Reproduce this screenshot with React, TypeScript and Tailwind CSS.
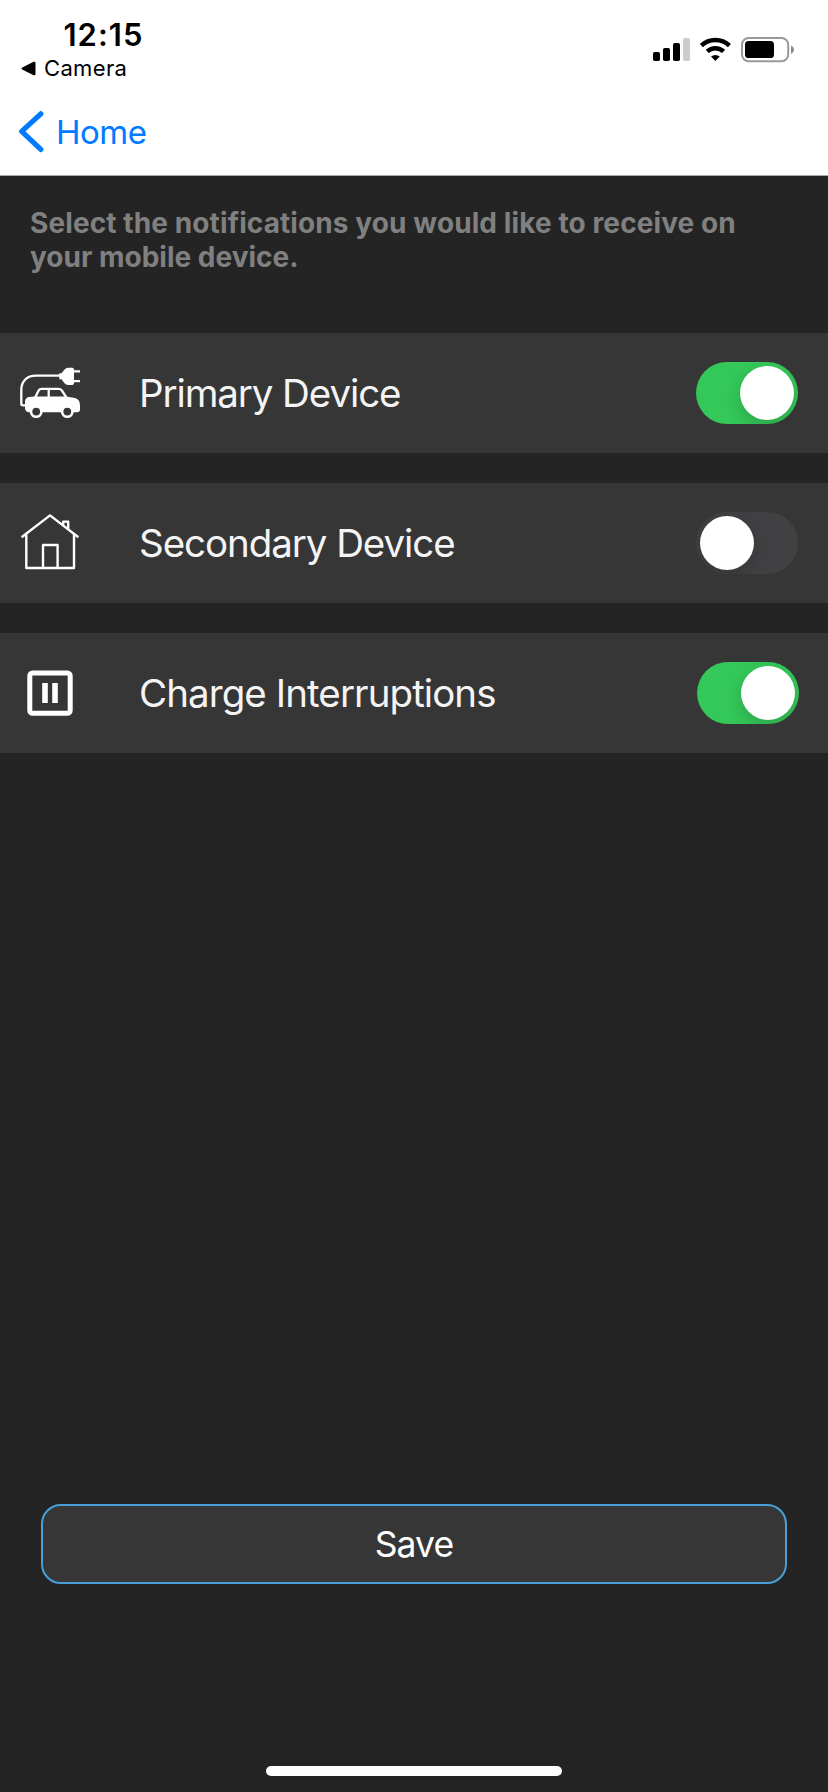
import { useState, type ReactNode } from "react";
import clsx from "clsx";

function StatusIcons() {
  return (
    <svg width="144" height="32" viewBox="652 34 144 32" aria-hidden="true">
      <rect x="653" y="52" width="7" height="9" rx="1.8" />
      <rect x="663" y="48" width="7" height="13" rx="1.8" />
      <rect x="673" y="43" width="7" height="18" rx="1.8" />
      <rect x="683" y="38" width="7" height="23" rx="1.8" fill="#cccccc" />
      <g fill="none" stroke="#000" strokeWidth="4.5">
        <path d="M701.4 45.6 A20.2 20.2 0 0 1 729.4 45.6" />
        <path d="M707.2 51.4 A12 12 0 0 1 723.6 51.4" />
      </g>
      <path d="M715.4 61 L711 56.6 A6.6 6.6 0 0 1 719.8 56.6 Z" />
      <rect x="742" y="38" width="46.2" height="23.2" rx="6.6" fill="#fff" stroke="#999999" strokeWidth="2" />
      <rect x="745" y="41" width="29" height="17" rx="3.6" />
      <path d="M791 45.5 C795 47.5 795 51.8 791 54 Z" fill="#8c8c8c" />
    </svg>
  );
}

function CarIcon() {
  return (
    <svg width="100" height="120" viewBox="0 0 100 120" aria-hidden="true">
      <path
        d="M27 72.3 H23 Q21.3 72.3 21.3 70.5 V57 C21.3 48 27 42.7 36 42.7 H61"
        fill="none" stroke="#fff" strokeWidth="2.3"
      />
      <path d="M59.3 40.2 H61.5 L64.5 36.4 Q66 34.8 68 34.8 H72.3 Q74 34.8 74 36.5 V50.2 Q74 51.9 72.3 51.9 H68 Q66 51.9 64.5 50.3 L61.5 46.2 H59.3 Z" fill="#fff" />
      <path d="M73 38.3 H80 M73 48.2 H80" stroke="#fff" strokeWidth="2.2" />
      <path
        d="M35.2 64.5 L38.6 57.6 Q39.6 55.8 41.6 55.8 H58.6 Q60.6 55.8 61.8 57.4 L66.4 64.5 M48.7 56 V64.5"
        fill="none" stroke="#fff" strokeWidth="2.3"
      />
      <path d="M29 64 L34.5 63.4 H66 L75 65 Q80 66.4 80 72 V76.6 Q80 79.3 77 79.3 H28.5 Q25 78.6 25 75 V69 Q25 64.8 29 64 Z" fill="#fff" />
      <circle cx="36.2" cy="78.6" r="5.2" fill="#363636" stroke="#fff" strokeWidth="2.6" />
      <circle cx="67.3" cy="78.6" r="5.2" fill="#363636" stroke="#fff" strokeWidth="2.6" />
    </svg>
  );
}

function HouseIcon() {
  return (
    <svg width="100" height="120" viewBox="0 0 100 120" fill="none" stroke="#fff" strokeWidth="2.4" strokeLinejoin="round" aria-hidden="true">
      <path d="M21.6 54.2 L50 32.4 L78.4 54.2" />
      <path d="M26.3 51.5 V85 H74 V51.5" />
      <path d="M43 85 V62 H57.6 V85" />
      <path d="M63.2 42 V38.6 H68.2 V46" />
    </svg>
  );
}

function PauseIcon() {
  return (
    <svg width="100" height="120" viewBox="0 0 100 120" aria-hidden="true">
      <rect x="29.8" y="39.9" width="40.4" height="40.4" rx="2.8" fill="none" stroke="#fff" strokeWidth="5" />
      <rect x="42.2" y="50" width="5.6" height="20" fill="#fff" />
      <rect x="52.2" y="50" width="5.6" height="20" fill="#fff" />
    </svg>
  );
}

function Toggle({ label, initial }: { label: string; initial: boolean }) {
  const [on, setOn] = useState(initial);
  return (
    <button
      type="button"
      role="switch"
      aria-checked={on}
      aria-label={label}
      onClick={() => setOn(!on)}
      className={clsx(
        "flex h-[62px] w-[102px] items-center overflow-hidden rounded-full px-1",
        on ? "justify-end bg-[#34c759]" : "justify-start bg-[#414143]",
      )}
    >
      <span className="size-[54px] rounded-full bg-white shadow-[0_6px_16px_rgba(0,0,0,0.17)]" />
    </button>
  );
}

function Row({ icon, label, tracking, on, inset }: { icon: ReactNode; label: string; tracking: string; on: boolean; inset: string }) {
  return (
    <li className={clsx("flex h-[120px] items-center bg-[#363636]", inset)}>
      {icon}
      <span className={clsx("flex-1 pt-0.5 pl-[39px] text-[38.5px] text-[#f4f4f4]", tracking)}>{label}</span>
      <Toggle label={label} initial={on} />
    </li>
  );
}

export default function App() {
  return (
    <div className="flex h-[1792px] w-[828px] flex-col bg-[#242424] font-['Inter',sans-serif]">
      <header className="flex h-44 flex-col border-b border-[#a8a8a8] bg-white">
        <div className="flex justify-between pt-[15px] pr-8">
          <div className="text-black">
            <div className="pl-[63.5px] text-[31px] leading-10 font-semibold tracking-[1px]">12:15</div>
            <div className="flex items-center pl-[21px] text-[22px] leading-[27px] tracking-[0.35px]">
              <svg width="15" height="15" viewBox="0 0 15 15" className="mr-[8px]" aria-hidden="true">
                <path d="M1.3 6.4 L12.6 0.8 Q14.5 0.2 14.5 2 V13 Q14.5 14.8 12.6 14.2 L1.3 8.6 Q-0.3 7.5 1.3 6.4 Z" />
              </svg>
              Camera
            </div>
          </div>
          <div className="pt-[19px]">
            <StatusIcons />
          </div>
        </div>
        <a className="mt-[29px] flex items-center pl-[18px] text-[33px] leading-[42px] tracking-[-0.5px] text-[#007aff]" href="#home">
          <svg width="28" height="42" viewBox="0 0 28 42" className="mr-[10px]" fill="none" aria-hidden="true">
            <path d="M22.8 2.8 L3.7 20.4 L22.8 38.4" stroke="#007aff" strokeWidth="5.2" strokeLinecap="round" strokeLinejoin="round" />
          </svg>
          Home
        </a>
      </header>

      <p className="h-[157px] pt-[30px] pl-[30px] text-[28px] leading-[34px] font-bold text-[#808080]">
        <span className="block tracking-[0.1px]">Select the notifications you would like to receive on</span>
        <span className="block">your mobile device.</span>
      </p>

      <ul className="flex flex-col gap-[30px]">
        <Row icon={<CarIcon />} label="Primary Device" tracking="tracking-[-1.1px]" on inset="pr-[30px]" />
        <Row icon={<HouseIcon />} label="Secondary Device" tracking="tracking-[-1.06px]" on={false} inset="pr-[30px]" />
        <Row icon={<PauseIcon />} label="Charge Interruptions" tracking="tracking-[-0.92px]" on inset="pr-[29px]" />
      </ul>

      <button type="button" className="mx-[41px] mt-auto h-20 rounded-[20px] border-2 border-[#4a9ed9] bg-[#363636] pt-0.5 text-[35.5px] tracking-[-0.9px] text-white">
        Save
      </button>
      <div className="mx-auto mt-[182px] mb-4 h-2.5 w-[296px] rounded-full bg-white" />
    </div>
  );
}
